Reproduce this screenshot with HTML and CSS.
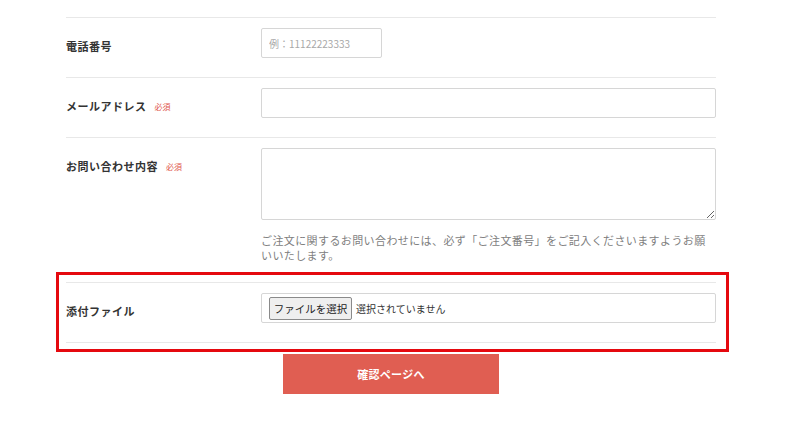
FILE: index.html
```html
<!DOCTYPE html>
<html lang="ja">
<head>
<meta charset="utf-8">
<title>お問い合わせ</title>
<link rel="stylesheet" href="styles.css">
</head>
<body>
<form class="form">
  <div class="row">
    <div class="label">電話番号</div>
    <div class="field">
      <input class="input input-short" type="text" placeholder="例：11122223333">
    </div>
  </div>
  <div class="row">
    <div class="label">メールアドレス<span class="req">必須</span></div>
    <div class="field">
      <input class="input" type="text">
    </div>
  </div>
  <div class="row">
    <div class="label">お問い合わせ内容<span class="req">必須</span></div>
    <div class="field">
      <textarea class="textarea"></textarea>
      <p class="help">ご注文に関するお問い合わせには、必ず「ご注文番号」をご記入くださいますようお願いいたします。</p>
    </div>
  </div>
  <div class="row row-highlight">
    <div class="label">添付ファイル</div>
    <div class="field">
      <div class="file-field">
        <span class="file-btn">ファイルを選択</span>
        <span class="file-status">選択されていません</span>
      </div>
    </div>
  </div>
  <div class="actions">
    <button type="button" class="submit">確認ページへ</button>
  </div>
</form>
</body>
</html>
```

FILE: styles.css
```css
* { box-sizing: border-box; }

html, body {
  margin: 0;
  padding: 0;
  background: #ffffff;
}

body {
  font-family: "Noto Sans CJK JP", "Noto Sans", sans-serif;
  color: #333333;
  padding-top: 17px;
}

.form {
  width: 650px;
  margin-left: 66px;
}

.row {
  display: flex;
  border-top: 1px solid #e8e8e8;
  padding: 10px 0 19px;
}

.row-highlight {
  position: relative;
  border-bottom: 1px solid #e8e8e8;
}

.row-highlight::after {
  content: "";
  position: absolute;
  left: -10px;
  right: -13px;
  top: -11px;
  bottom: -10px;
  border: 3px solid #e5090f;
  pointer-events: none;
}

.label {
  width: 195px;
  flex: none;
  padding-top: 8px;
  font-size: 11px;
  line-height: 20px;
  font-weight: 700;
  letter-spacing: 0.5px;
  color: #333333;
}

.req {
  margin-left: 8px;
  font-size: 8px;
  font-weight: 400;
  color: #e0564c;
  letter-spacing: 0;
  vertical-align: 1px;
}

.field {
  flex: 1;
  min-width: 0;
}

.input {
  display: block;
  width: 100%;
  height: 30px;
  margin: 0;
  padding: 0 7px;
  border: 1px solid #d6d6d6;
  border-radius: 2px;
  background: #ffffff;
  font-family: "Noto Sans CJK JP", "Noto Sans", sans-serif;
  font-size: 10px;
  color: #333333;
  outline: none;
}

.input::placeholder {
  color: #a8a8a8;
}

.input-short {
  width: 121px;
}

.textarea {
  display: block;
  width: 100%;
  height: 72px;
  margin: 0;
  padding: 6px 7px;
  border: 1px solid #d6d6d6;
  border-radius: 2px;
  background: #ffffff;
  resize: vertical;
  font-family: "Noto Sans CJK JP", "Noto Sans", sans-serif;
  font-size: 11px;
  outline: none;
}

.help {
  margin: 13px 0 0;
  font-size: 11px;
  line-height: 15px;
  letter-spacing: 0.4px;
  color: #808080;
}

.file-field {
  display: flex;
  align-items: center;
  height: 30px;
  padding: 0 7px;
  border: 1px solid #d6d6d6;
  border-radius: 2px;
  background: #ffffff;
}

.file-btn {
  display: inline-flex;
  align-items: center;
  justify-content: center;
  width: 83px;
  height: 23px;
  border: 1px solid #8a8a8a;
  border-radius: 2px;
  background: #efefef;
  font-size: 10.5px;
  color: #222222;
}

.file-status {
  margin-left: 4px;
  font-size: 10px;
  color: #333333;
}

.actions {
  display: flex;
  justify-content: center;
  padding-top: 11px;
}

.submit {
  width: 216px;
  height: 40px;
  border: none;
  border-radius: 0;
  background: #e05e52;
  color: #ffffff;
  font-family: "Noto Sans CJK JP", "Noto Sans", sans-serif;
  font-size: 11px;
  font-weight: 700;
  letter-spacing: 0.3px;
  cursor: pointer;
}
```
